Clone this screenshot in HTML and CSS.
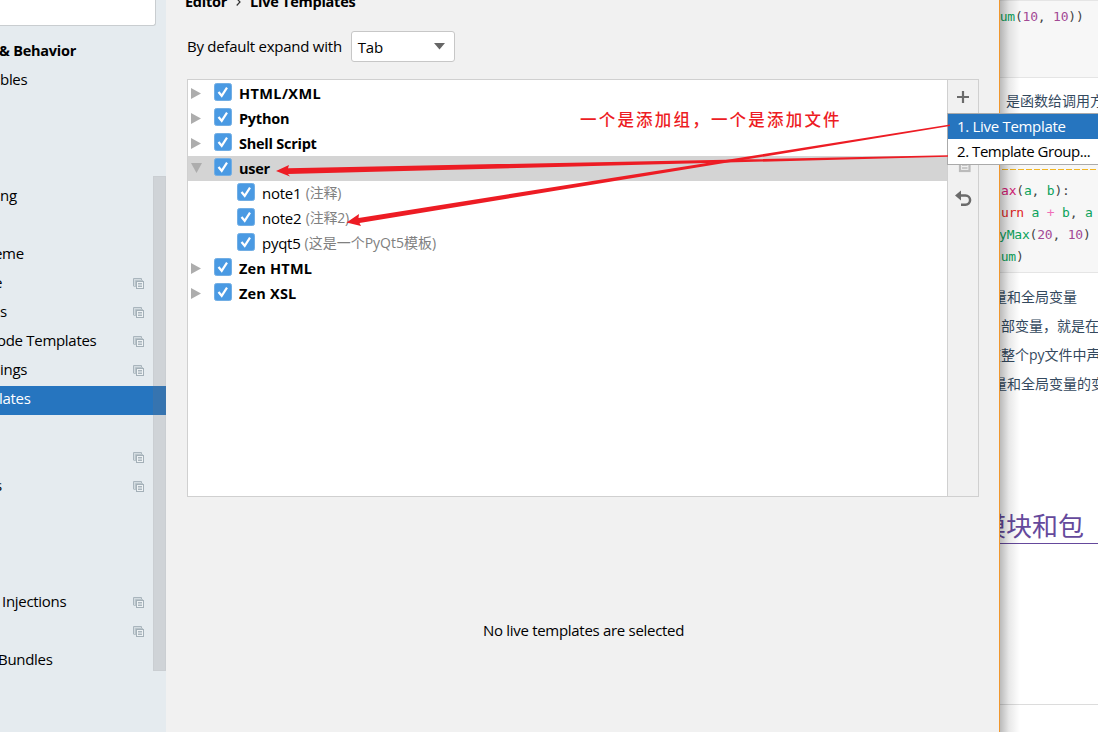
FILE: index.html
```html
<!DOCTYPE html>
<html lang="en">
<head>
<meta charset="utf-8">
<title>Live Templates</title>
<link rel="stylesheet" href="styles.css">
</head>
<body>
<svg class="defs" width="0" height="0">
  <symbol id="copy" viewBox="0 0 11 11"><path d="M.5 8V.5H8.5V2" fill="none" stroke="#a9b5bd"/><path d="M1 1H8V3H3V8H1Z" fill="#d3dbe0"/><path d="M.5 8.5H3M2.500 8V2.500H10" fill="none" stroke="#b9c4ca"/><rect x="3.500" y="3.500" width="7" height="7" fill="#eef2f4" stroke="#a4b0b8"/><path d="M5 5.500H9M5 7H9M5 8.500H9" stroke="#a9b5bd"/></symbol>
  <symbol id="check" viewBox="0 0 18 18"><rect x=".5" y=".5" width="17" height="17" rx="2" fill="#4a9ae3" stroke="#72aee4"/><path d="M4.500 9 7.700 12.800 13 4.600" fill="none" stroke="#fff" stroke-width="2.200"/></symbol>
  <symbol id="closed" viewBox="0 0 10 11"><path d="M0 0 10 5.500 0 11Z" fill="#adadad"/></symbol>
  <symbol id="open" viewBox="0 0 11 10"><path d="M0 0H11L5.500 10Z" fill="#adadad"/></symbol>
</svg>
<div class="app">
  <aside class="sidebar">
    <div class="search"></div>
    <ul class="nav">
      <li class="bold"><span class="t-behavior">&amp; Behavior</span></li>
      <li><span>bles</span></li>
      <li></li><li></li><li></li>
      <li><span>ng</span></li>
      <li></li>
      <li><span class="t-eme">eme</span></li>
      <li><span class="t-cut">e</span><svg class="copy"><use href="#copy"/></svg></li>
      <li><span>s</span><svg class="copy"><use href="#copy"/></svg></li>
      <li><span class="t-code">ode Templates</span><svg class="copy"><use href="#copy"/></svg></li>
      <li><span>ings</span><svg class="copy"><use href="#copy"/></svg></li>
      <li class="active"><span class="t-lates">lates</span></li>
      <li></li>
      <li><svg class="copy"><use href="#copy"/></svg></li>
      <li><span class="t-s">s</span><svg class="copy"><use href="#copy"/></svg></li>
      <li></li><li></li><li></li>
      <li><span class="t-inj">Injections</span><svg class="copy"><use href="#copy"/></svg></li>
      <li><svg class="copy"><use href="#copy"/></svg></li>
      <li><span class="t-bundles">Bundles</span></li>
    </ul>
    <div class="scrollbar"></div>
  </aside>
  <main class="settings">
    <div class="crumbs"><span>Editor</span><svg width="5" height="8" viewBox="0 0 5 8"><path d="M.7.5 4 4 .7 7.500" fill="none" stroke="#333" stroke-width="1.200"/></svg><span>Live Templates</span></div>
    <div class="expand"><label>By default expand with</label>
      <div class="select"><span>Tab</span><svg width="11" height="7" viewBox="0 0 11 7"><path d="M0 0H11L5.500 6.500Z" fill="#666"/></svg></div>
    </div>
    <div class="panel">
      <div class="tree">
        <div class="row"><svg class="tw"><use href="#closed"/></svg><svg class="cb"><use href="#check"/></svg><b class="g-html">HTML/XML</b></div>
        <div class="row"><svg class="tw"><use href="#closed"/></svg><svg class="cb"><use href="#check"/></svg><b>Python</b></div>
        <div class="row"><svg class="tw"><use href="#closed"/></svg><svg class="cb"><use href="#check"/></svg><b>Shell Script</b></div>
        <div class="row sel"><svg class="tw open"><use href="#open"/></svg><svg class="cb"><use href="#check"/></svg><b>user</b></div>
        <div class="row child"><svg class="cb"><use href="#check"/></svg><span>note1</span><em>(注释)</em></div>
        <div class="row child"><svg class="cb"><use href="#check"/></svg><span>note2</span><em>(注释2)</em></div>
        <div class="row child"><svg class="cb"><use href="#check"/></svg><span>pyqt5</span><em class="wide">(这是一个PyQt5模板)</em></div>
        <div class="row"><svg class="tw"><use href="#closed"/></svg><svg class="cb"><use href="#check"/></svg><b class="g-zen">Zen HTML</b></div>
        <div class="row"><svg class="tw"><use href="#closed"/></svg><svg class="cb"><use href="#check"/></svg><b class="g-zen">Zen XSL</b></div>
      </div>
      <div class="tools">
        <svg class="plus" width="12" height="12" viewBox="0 0 12 12"><path d="M6 0V12M0 6H12" stroke="#6b6b6b" stroke-width="2.200"/></svg>
        <svg class="dup" width="16" height="16" viewBox="0 0 16 16"><path d="M2 3V8" stroke="#bbb" stroke-width="2"/><rect x="5" y="4" width="9.500" height="10" fill="none" stroke="#bbb" stroke-width="2.200"/><path d="M7 8H12.500M7 11H12.500" stroke="#bbb" stroke-width="1.600"/></svg>
        <svg class="undo" width="17" height="17" viewBox="0 0 17 17"><path d="M3 5.500H10.500A4.600 4.600 0 0 1 10.500 14.700H6" fill="none" stroke="#6b6b6b" stroke-width="2.500"/><path d="M0 5.500 6 .5V10.500Z" fill="#6b6b6b"/></svg>
      </div>
    </div>
    <p class="empty">No live templates are selected</p>
  </main>
  <section class="doc">
    <pre class="code first"><i class="fn">Sum</i>(<i class="nu">10</i>, <i class="nu">10</i>))</pre>
    <p class="lead">是函数给调用方</p>
    <div class="code second"><div class="dash"></div><pre class="l1"><i class="pk">ax</i>(<i class="fn">a</i>, <i class="fn">b</i>):</pre><pre class="l2"><i class="kw">urn</i> <i class="fn">a</i> <i class="op">+</i> <i class="fn">b</i>, <i class="fn">a</i></pre><pre class="l3"><i class="fn">yMax</i>(<i class="nu">20</i>, <i class="nu">10</i>)</pre><pre class="l4"><i class="fn">num</i>)</pre></div>
    <p class="p1">量和全局变量</p>
    <p class="p2">部变量，就是在</p>
    <p class="p3">在整个py文件中声</p>
    <p class="p1">量和全局变量的变</p>
    <h2>模块和包</h2>
    <hr>
    <div class="shade"></div>
  </section>
  <div class="popup"><div class="on">1. Live Template</div><div class="two">2. Template Group...</div></div>
  <div class="note">一个是添加组，一个是添加文件</div>
  <svg class="arrows" width="1098" height="732" viewBox="0 0 1098 732" fill="#ed1c24"><path d="M276 171 289 165 288 168.200 948 155.300 948 156.800 288 174 290 176.500Z"/><path d="M346.500 222.500 359 214 358.500 218 950 124.500 950 126 359.500 223 361 226Z"/></svg>
</div>
</body>
</html>
```
FILE: styles.css
```css
*{box-sizing:border-box}
body{margin:0;font:15px/20px "Open Sans","Noto Sans CJK SC",sans-serif;letter-spacing:-.3px;color:#000}
.defs{position:absolute}
.app{position:relative;display:flex;width:1098px;height:732px;overflow:hidden;background:#f1f1f1}
p,h2,pre,ul{margin:0;padding:0}
i,em{font-style:normal}
span,b,label,pre,p{white-space:nowrap}
.sidebar{position:relative;width:166px;background:#e5ebef;overflow:hidden;flex:none}
.search{width:156px;height:26px;background:#fff;border:1px solid #c9cdd0;border-width:0 1px 1px 0;border-radius:0 0 3px 0}
.nav{list-style:none;padding-top:12px}
.nav li{display:flex;align-items:center;height:29px;padding-bottom:5px}
.nav .bold{font-weight:700;font-size:14.500px;padding-bottom:3px;letter-spacing:-.25px}
.nav .active{background:#2675bf;color:#fff}
.copy{width:11px;height:11px;margin:3px 22px 0 auto;flex:none}
.t-eme{margin-left:-6px}
.t-cut{margin-left:-6px}
.t-s{margin-left:-5px}
.t-code{margin-left:-3px}
.t-lates{margin-left:-1px}
.t-inj{margin-left:2px}
.t-bundles{margin-left:-2px}
.t-behavior{margin-left:-1px}
.scrollbar{position:absolute;left:153px;top:176px;width:13px;height:495px;background:rgba(120,115,120,.2);border:1px solid rgba(120,115,120,.05)}
.settings{width:834px;flex:none;border-right:1px solid #f0962c;padding-left:21px;background:#f1f1f1}
.crumbs{display:flex;align-items:center;height:20px;margin:-8px 0 0 -2px;gap:9px;font-weight:700;font-size:14.500px;letter-spacing:-.25px}
.expand{display:flex;align-items:center;height:32px;margin-top:18px;letter-spacing:-.25px}
.select{display:flex;align-items:center;justify-content:space-between;width:104px;height:31px;margin:1px 0 0 9px;padding:0 9px 0 6px;background:#fff;border:1px solid #c7c7c7;border-radius:3px}
.panel{display:flex;width:792px;height:418px;margin-top:17px;border:1px solid #d0d0d0}
.tree{flex:1;background:#fff;padding-top:1px;letter-spacing:-.25px}
.row{display:flex;align-items:center;height:25px;padding:0 0 0 3px}
.row.sel{background:#d4d4d4}
.row b{font-size:14.500px;margin-left:7px}
.row .g-html{letter-spacing:.4px}
.row .g-zen{letter-spacing:.2px}
.row.child{padding:0 0 1px 49px}
.row span{margin-left:7px}
.row em{color:#808080;margin-left:4.500px;font-size:14px}
.row .wide{letter-spacing:0;margin-left:4px}
.tw{width:10px;height:11px;margin-right:13px;margin-top:-1px}
.tw.open{width:11px;height:10px;margin-left:0;margin-right:12px}
.cb{width:18px;height:18px;flex:none;margin-top:-3px}
.child .cb{margin-top:-2px}
.tools{display:flex;flex-direction:column;align-items:center;width:31px;border-left:1px solid #d0d0d0;padding-top:11px}
.dup{margin-top:54px}
.undo{margin-top:17px}
.empty{margin:123px 0 0 296px}
.doc{position:relative;width:98px;flex:none;background:#fff;overflow:hidden;color:#34495e;font-size:14px;letter-spacing:0}
.code{background:#f7f7f7;font:13px/22px "DejaVu Sans Mono",monospace;color:#444;letter-spacing:-.2px}
.first{height:78px;border:1px solid #e5e5e5;border-width:1px 0;padding-top:5px;text-indent:-8px}
.code pre{font:inherit}
.fn{color:#0ca35b}.nu{color:#a34a95}.pk{color:#d81b78}.kw{color:#e02424}.op{color:#f06fb8}
.lead{padding-left:6px;height:79px;padding-top:13px}
.second{height:116px;border-bottom:1px solid #e5e5e5;padding-top:12px}
.dash{height:1px;margin-left:2px;background:repeating-linear-gradient(90deg,#f3b521 0 6px,transparent 6px 8px)}
.l1{padding:10px 0 0 1px}.l2{padding-left:1px}
.l3{margin-left:-1px}.l4{margin-left:-7px}
.p1,.p2,.p3{height:29px;line-height:29px;position:relative;top:9px}
.p1{margin-left:-7px}.p2{margin-left:1px}.p3{margin-left:-13px}
.doc h2{font-size:26px;font-weight:400;color:#65499c;height:36px;line-height:36px;margin:119px 0 0 -20px;border-bottom:1px solid #65499c}
.doc hr{border:0;border-top:1px solid #dcdcdc;margin:160px 0 0}
.shade{position:absolute;left:0;top:0;width:20px;height:732px;background:linear-gradient(90deg,rgba(0,0,0,.27),rgba(0,0,0,.09) 45%,transparent)}
.popup{position:absolute;left:947px;top:113px;width:160px;height:52px;background:#fff;border:1px solid #aaa}
.popup div{height:25px;line-height:24px;padding-left:9px;white-space:nowrap}
.popup .on{background:#2675bf;color:#fff}
.popup .two{letter-spacing:-.45px}
.note{position:absolute;left:580px;top:108px;font:500 16.500px/22px "Noto Sans CJK SC",sans-serif;letter-spacing:2.200px;color:#ed1c24;white-space:nowrap}
.arrows{position:absolute;left:0;top:0}
```
